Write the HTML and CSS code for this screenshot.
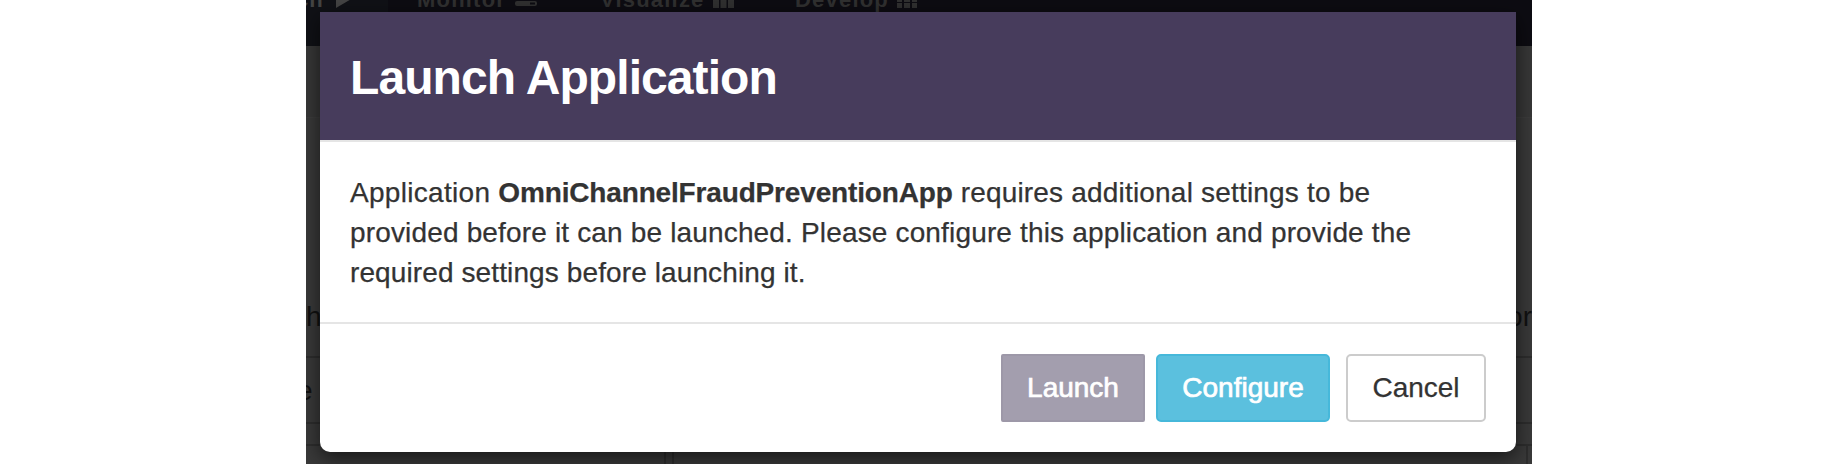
FILE: index.html
```html
<!DOCTYPE html>
<html lang="en">
<head>
<meta charset="utf-8">
<title>Launch Application</title>
<link rel="stylesheet" href="styles.css">
</head>
<body>
<div class="app">
  <nav class="nav">
    <div class="nav-item nav-active"><span class="label-launch">Launch</span>
      <svg class="icon-play" width="17" height="20" viewBox="0 0 17 20"><path d="M0 0L17 10L0 20Z"/></svg></div>
    <div class="nav-item nav-monitor"><span>Monitor</span>
      <svg width="22" height="14" viewBox="0 0 22 14"><path fill-rule="evenodd" d="M2 0H20Q22 0 22 2V4Q22 6 20 6H2Q0 6 0 4V2Q0 0 2 0ZM2 9H20Q22 9 22 11V12Q22 14 20 14H2Q0 14 0 12V11Q0 9 2 9ZM15 10.500V12.500H20V10.500Z"/></svg></div>
    <div class="nav-item nav-visualize"><span>Visualize</span>
      <svg width="21" height="16" viewBox="0 0 21 16"><path d="M0 5H6V16H0ZM7.500 0H13.500V16H7.500ZM15 3H21V16H15Z"/></svg></div>
    <div class="nav-item nav-develop"><span>Develop</span>
      <svg width="20" height="18" viewBox="0 0 20 18"><path d="M0 0H5V5H0ZM7 0H13V5H7ZM15 0H20V5H15ZM0 6H5V12H0ZM7 6H13V12H7ZM15 6H20V12H15ZM0 13H5V18H0ZM7 13H13V18H7ZM15 13H20V18H15Z"/></svg></div>
  </nav>
  <div class="subbar"></div>
  <div class="page">
    <div class="row row-head"><span>h</span><span class="right">or</span></div>
    <div class="row row-data"><span>e</span></div>
    <div class="row row-gap"></div>
    <div class="row row-panels"><div class="panel panel-a"></div><div class="panel panel-b"></div><div class="panel panel-c"></div></div>
  </div>
  <section class="modal" role="dialog" aria-label="Launch Application">
    <header class="modal-header"><h1 class="modal-title">Launch Application</h1></header>
    <div class="modal-body">
      <p class="message">
        <span class="line line-1"><span class="lead">Application </span><b>OmniChannelFraudPreventionApp</b> requires additional settings to be</span>
        <span class="line line-2">provided before it can be launched. Please configure this application and provide the</span>
        <span class="line line-3">required settings before launching it.</span>
      </p>
    </div>
    <footer class="modal-footer">
      <button class="btn btn-launch" disabled>Launch</button>
      <button class="btn btn-configure">Configure</button>
      <button class="btn btn-cancel">Cancel</button>
    </footer>
  </section>
</div>
</body>
</html>
```
FILE: styles.css
```css
* { box-sizing: border-box; }
body {
  margin: 0;
  background: #fff;
  font-family: "Liberation Sans", Arial, sans-serif;
  color: #333;
}
.app {
  position: relative;
  width: 1226px;
  height: 464px;
  margin-left: 306px;
  overflow: hidden;
  background: #393939;
}
.nav {
  display: flex;
  height: 46px;
  background: #0d0c12;
  color: #303030;
  font-size: 22px;
  font-weight: bold;
  line-height: 28px;
}
.nav-item { display: flex; flex: none; letter-spacing: 1.2px; height: 46px; }
.nav-item > span { margin-top: -14px; }
.nav-item svg { fill: #303030; flex: none; }
.nav-active { width: 82px; background: #101116; color: #444; justify-content: flex-end; padding-right: 35px; }
.nav-active svg { fill: #444; margin-top: -12px; margin-left: 12px; }
.nav-monitor { width: 183px; padding-left: 29px; }
.nav-monitor svg { margin: -8px 0 0 9px; }
.nav-visualize { width: 195px; padding-left: 29px; }
.nav-visualize svg { margin: -8px 0 0 8px; }
.nav-develop { padding-left: 29px; }
.nav-develop svg { margin: -10px 0 0 8px; }
.subbar { height: 72px; background: #373737; border-bottom: 1px solid #3c3c3c; }
.page { font-size: 28px; line-height: 32px; color: #111; }
.row { display: flex; justify-content: space-between; border-bottom: 2px solid #2d2d2d; }
.row-head { height: 240px; padding-top: 183px; }
.row-data { height: 66px; padding-top: 17px; }
.row-data span { margin-left: -9px; }
.row-gap { height: 22px; }
.row-panels { height: 20px; justify-content: flex-start; border: 0; }
.panel { border-right: 2px solid #2d2d2d; }
.panel-a { width: 360px; }
.panel-b { width: 8px; }
.panel-c { width: 854px; }
.modal {
  position: absolute;
  left: 14px;
  top: 12px;
  width: 1196px;
  height: 440px;
  background: #fff;
  border-radius: 0 0 10px 10px;
  box-shadow: 0 6px 20px rgba(0, 0, 0, .6);
}
.modal-header {
  height: 130px;
  padding: 38px 30px 0;
  background: #473c5c;
  border-bottom: 2px solid #e5e5e5;
}
.modal-title { margin: 0; font-size: 48px; line-height: 55px; letter-spacing: -.93px; color: #fff; white-space: nowrap; }
.modal-body { height: 182px; padding: 31px 30px 0; border-bottom: 2px solid #e5e5e5; }
.message { margin: 0; font-size: 28px; line-height: 40px; -webkit-text-stroke: .25px #333; }
.line { display: block; width: max-content; white-space: nowrap; }
.line-1 { letter-spacing: .19px; }
.lead { letter-spacing: .3px; }
.line-1 b { letter-spacing: -.16px; }
.line-2 { letter-spacing: .16px; }
.line-3 { letter-spacing: .11px; }
.modal-footer { display: flex; justify-content: flex-end; padding: 30px 30px 0 0; }
.btn {
  height: 68px;
  padding: 0;
  border: 2px solid;
  border-radius: 5px;
  font: 28px/40px "Liberation Sans", Arial, sans-serif;
}
.btn-launch { width: 144px; margin-right: 11px; background: #a39eae; border-color: #9d98a8; border-radius: 2px; color: #fff; -webkit-text-stroke: .7px #fff; }
.btn-configure { width: 174px; margin-right: 16px; background: #5bc0de; border-color: #46b8da; color: #fff; -webkit-text-stroke: .7px #fff; }
.btn-cancel { width: 140px; background: #fff; border-color: #ccc; color: #333; -webkit-text-stroke: .25px #333; }
```
